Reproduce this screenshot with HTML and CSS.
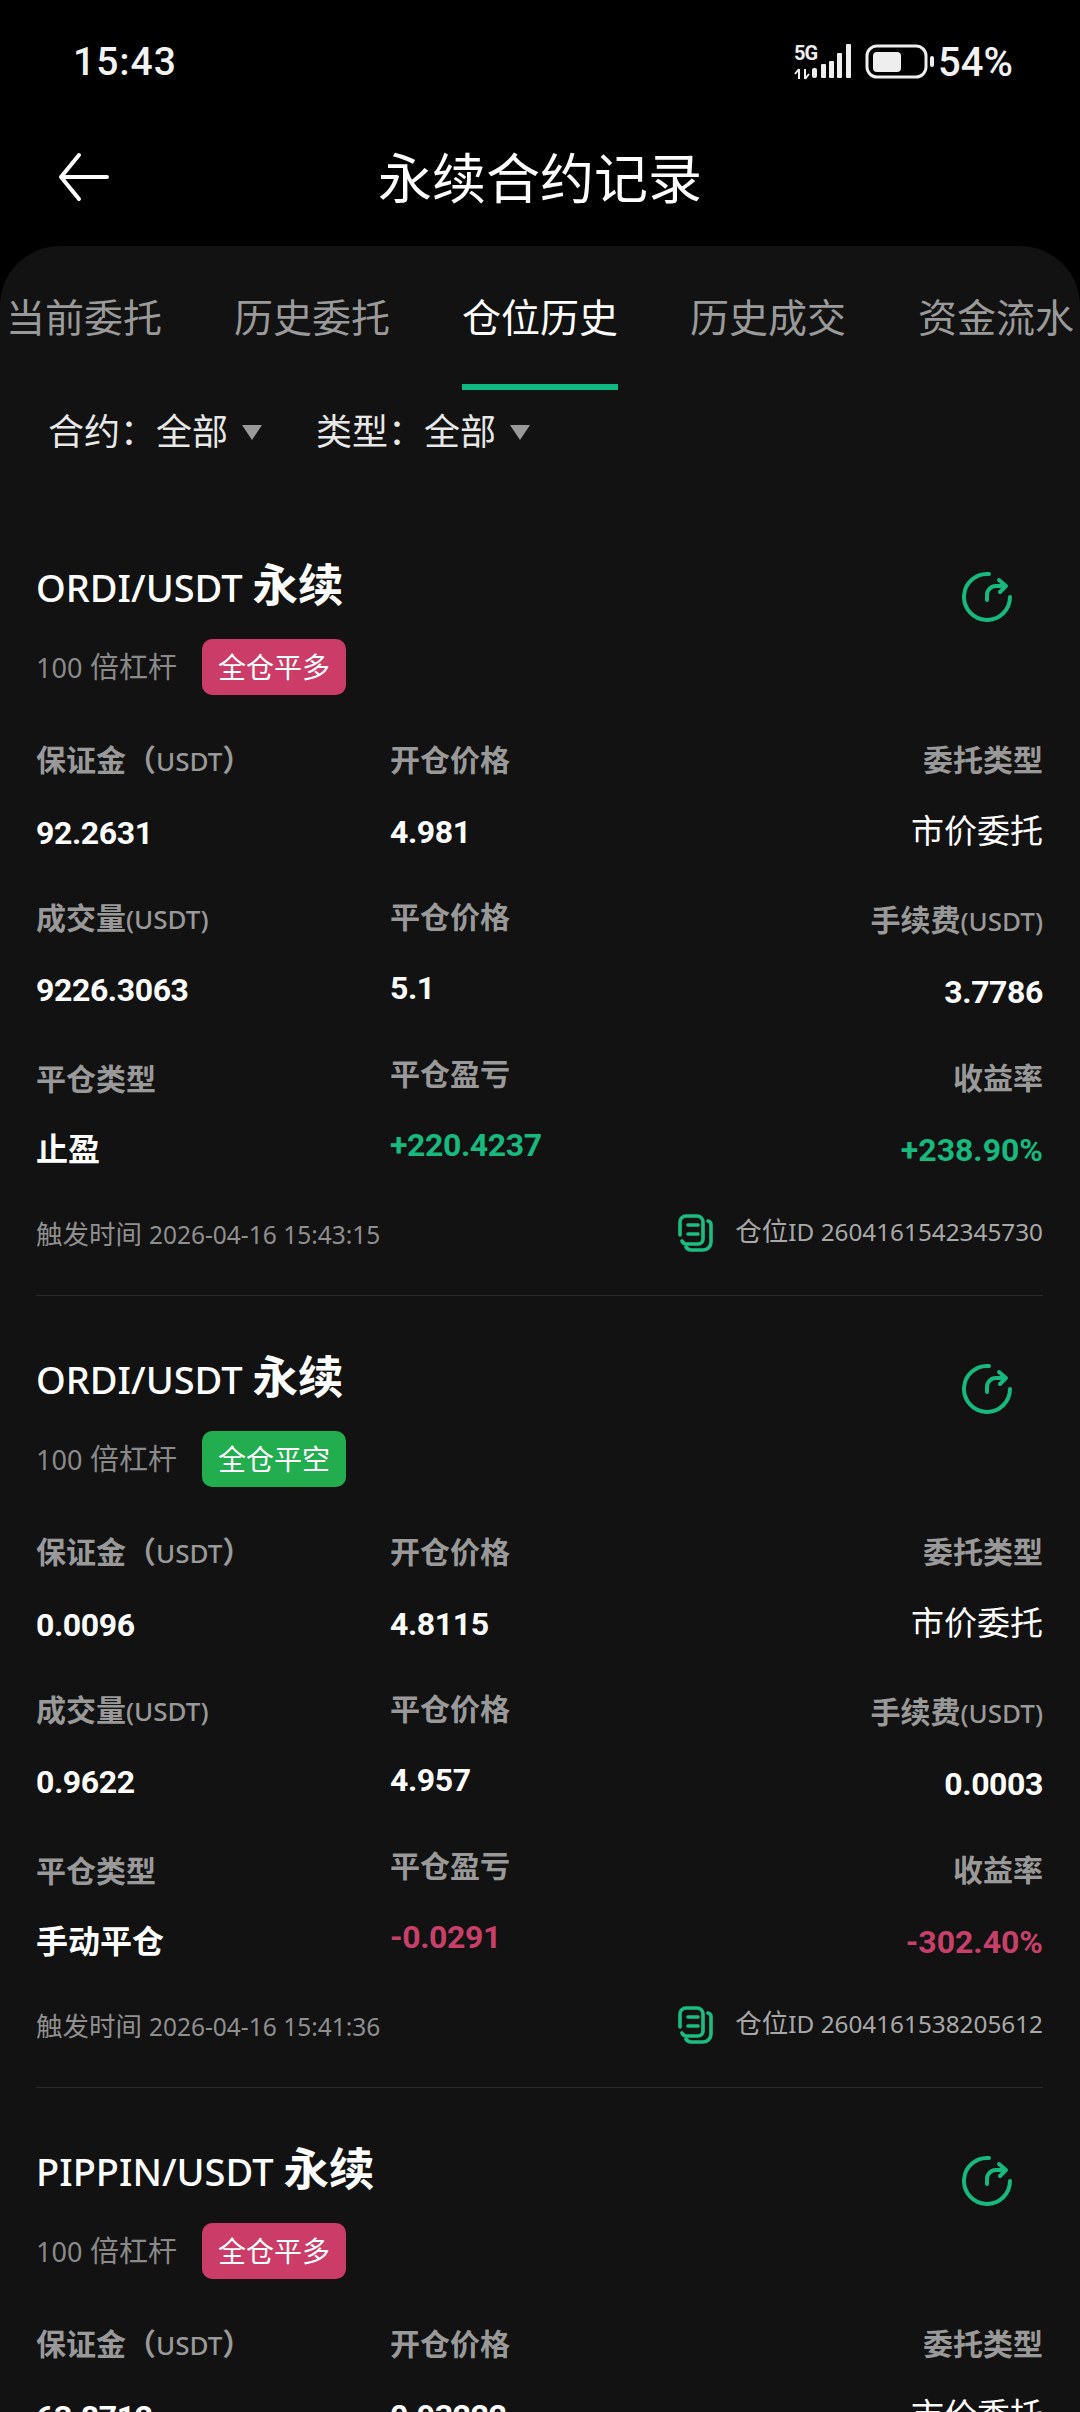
FILE: index.html
```html
<!DOCTYPE html>
<html>
  <head>
    <title>永续合约记录</title>
    <link rel="stylesheet" href="styles.css">
  </head>
  <body>
    <div class="screen">
      <div class="statusbar">
        <span class="clock">15:43</span>
        <div class="status-right">
          <div class="network">
            <span class="network-label">5G</span>
            <svg class="network-arrows" width="16" height="12" viewBox="0 0 16 12">
              <path d="M5 1v10M5 1L1 6M11 11V1M11 11l4-5" fill="none" stroke="#eee" stroke-width="2"/>
            </svg>
          </div>
          <svg class="signal" width="40" height="36" viewBox="0 0 40 36">
            <rect x="0" y="24" width="5" height="10" rx="2" fill="#eee"/>
            <rect x="9" y="20" width="5" height="14" rx="1" fill="#eee"/>
            <rect x="17" y="17" width="5" height="17" rx="1" fill="#eee"/>
            <rect x="25" y="9" width="5" height="25" rx="1" fill="#eee"/>
            <rect x="34" y="0" width="5" height="34" rx="1" fill="#eee"/>
          </svg>
          <svg class="battery" width="70" height="36" viewBox="0 0 70 36">
            <rect x="2" y="2" width="59" height="31" rx="10" fill="none" stroke="#eee" stroke-width="3"/>
            <rect x="8" y="8" width="28" height="20" rx="4" fill="#eee"/>
            <rect x="65" y="12" width="4" height="11" rx="2" fill="#eee"/>
          </svg>
          <span class="percent">54%</span>
        </div>
      </div>

      <div class="navbar">
        <svg class="back" width="56" height="56" viewBox="0 0 56 56">
          <path d="M52 28H6M24 6L6 28l18 22" fill="none" stroke="#fff" stroke-width="4" stroke-linecap="round" stroke-linejoin="round"/>
        </svg>
        <h1 class="page-title">永续合约记录</h1>
      </div>

      <div class="sheet">
        <div class="tabs">
          <div class="tab">当前委托</div>
          <div class="tab">历史委托</div>
          <div class="tab active">仓位历史</div>
          <div class="tab">历史成交</div>
          <div class="tab">资金流水</div>
        </div>

        <div class="filters">
          <div class="filter">合约：全部<span class="caret"></span></div>
          <div class="filter">类型：全部<span class="caret"></span></div>
        </div>

        <div class="card">
          <div class="card-head">
            <div>
              <div class="symbol">ORDI/USDT <b>永续</b></div>
              <div class="sub">
                <span class="leverage"><span class="lev-num">100</span> 倍杠杆</span>
                <span class="badge red">全仓平多</span>
              </div>
            </div>
            <svg class="share" width="52" height="52" viewBox="0 0 52 52">
              <path d="M27 3a23 23 0 1 0 21 23" fill="none" stroke="#17b97f" stroke-width="4" stroke-linecap="round"/>
              <path d="M25 29v-5a9 9 0 0 1 9-9h9M37 9l7 6-6 6" fill="none" stroke="#17b97f" stroke-width="4" stroke-linecap="round" stroke-linejoin="round"/>
            </svg>
          </div>
          <div class="stats">
            <div class="col col-1">
              <div class="label">保证金（<span class="unit">USDT</span>）</div>
              <div class="value">92.2631</div>
              <div class="label">成交量<span class="unit">(USDT)</span></div>
              <div class="value">9226.3063</div>
              <div class="label">平仓类型</div>
              <div class="value cjk">止盈</div>
            </div>
            <div class="col col-2">
              <div class="label">开仓价格</div>
              <div class="value">4.981</div>
              <div class="label">平仓价格</div>
              <div class="value">5.1</div>
              <div class="label">平仓盈亏</div>
              <div class="value green">+220.4237</div>
            </div>
            <div class="col col-3">
              <div class="label">委托类型</div>
              <div class="value plain">市价委托</div>
              <div class="label">手续费<span class="unit">(USDT)</span></div>
              <div class="value">3.7786</div>
              <div class="label">收益率</div>
              <div class="value green rate">+238.90%</div>
            </div>
          </div>
          <div class="card-foot">
            <span class="trigger">触发时间 <span class="num">2026-04-16 15:43:15</span></span>
            <div class="position-id">
              <svg class="copy" width="36" height="40" viewBox="0 0 36 40">
                <path d="M3 22V9a6 6 0 0 1 6-6h11a6 6 0 0 1 6 6v17a5 5 0 0 1-5 5H9a5 5 0 0 1-4-3" fill="none" stroke="#1dbd82" stroke-width="3.6" stroke-linecap="round"/>
                <path d="M31 8a4 4 0 0 1 3 4v17a8 8 0 0 1-8 8H14a6 6 0 0 1-5-3" fill="none" stroke="#1dbd82" stroke-width="3.6" stroke-linecap="round"/>
                <path d="M11 12h10M11 21h10" fill="none" stroke="#1dbd82" stroke-width="3.6" stroke-linecap="round"/>
              </svg>
              <span class="position-text">仓位<span class="num-id">ID 2604161542345730</span></span>
            </div>
          </div>
        </div>

        <div class="card">
          <div class="card-head">
            <div>
              <div class="symbol">ORDI/USDT <b>永续</b></div>
              <div class="sub">
                <span class="leverage"><span class="lev-num">100</span> 倍杠杆</span>
                <span class="badge green-bg">全仓平空</span>
              </div>
            </div>
            <svg class="share" width="52" height="52" viewBox="0 0 52 52">
              <path d="M27 3a23 23 0 1 0 21 23" fill="none" stroke="#17b97f" stroke-width="4" stroke-linecap="round"/>
              <path d="M25 29v-5a9 9 0 0 1 9-9h9M37 9l7 6-6 6" fill="none" stroke="#17b97f" stroke-width="4" stroke-linecap="round" stroke-linejoin="round"/>
            </svg>
          </div>
          <div class="stats">
            <div class="col col-1">
              <div class="label">保证金（<span class="unit">USDT</span>）</div>
              <div class="value">0.0096</div>
              <div class="label">成交量<span class="unit">(USDT)</span></div>
              <div class="value">0.9622</div>
              <div class="label">平仓类型</div>
              <div class="value cjk">手动平仓</div>
            </div>
            <div class="col col-2">
              <div class="label">开仓价格</div>
              <div class="value">4.8115</div>
              <div class="label">平仓价格</div>
              <div class="value">4.957</div>
              <div class="label">平仓盈亏</div>
              <div class="value red-text">-0.0291</div>
            </div>
            <div class="col col-3">
              <div class="label">委托类型</div>
              <div class="value plain">市价委托</div>
              <div class="label">手续费<span class="unit">(USDT)</span></div>
              <div class="value">0.0003</div>
              <div class="label">收益率</div>
              <div class="value red-text rate">-302.40%</div>
            </div>
          </div>
          <div class="card-foot">
            <span class="trigger">触发时间 <span class="num">2026-04-16 15:41:36</span></span>
            <div class="position-id">
              <svg class="copy" width="36" height="40" viewBox="0 0 36 40">
                <path d="M3 22V9a6 6 0 0 1 6-6h11a6 6 0 0 1 6 6v17a5 5 0 0 1-5 5H9a5 5 0 0 1-4-3" fill="none" stroke="#1dbd82" stroke-width="3.6" stroke-linecap="round"/>
                <path d="M31 8a4 4 0 0 1 3 4v17a8 8 0 0 1-8 8H14a6 6 0 0 1-5-3" fill="none" stroke="#1dbd82" stroke-width="3.6" stroke-linecap="round"/>
                <path d="M11 12h10M11 21h10" fill="none" stroke="#1dbd82" stroke-width="3.6" stroke-linecap="round"/>
              </svg>
              <span class="position-text">仓位<span class="num-id">ID 2604161538205612</span></span>
            </div>
          </div>
        </div>

        <div class="card">
          <div class="card-head">
            <div>
              <div class="symbol">PIPPIN/USDT <b>永续</b></div>
              <div class="sub">
                <span class="leverage"><span class="lev-num">100</span> 倍杠杆</span>
                <span class="badge red">全仓平多</span>
              </div>
            </div>
            <svg class="share" width="52" height="52" viewBox="0 0 52 52">
              <path d="M27 3a23 23 0 1 0 21 23" fill="none" stroke="#17b97f" stroke-width="4" stroke-linecap="round"/>
              <path d="M25 29v-5a9 9 0 0 1 9-9h9M37 9l7 6-6 6" fill="none" stroke="#17b97f" stroke-width="4" stroke-linecap="round" stroke-linejoin="round"/>
            </svg>
          </div>
          <div class="stats">
            <div class="col col-1">
              <div class="label">保证金（<span class="unit">USDT</span>）</div>
              <div class="value">63.8712</div>
            </div>
            <div class="col col-2">
              <div class="label">开仓价格</div>
              <div class="value">0.93222</div>
            </div>
            <div class="col col-3">
              <div class="label">委托类型</div>
              <div class="value plain">市价委托</div>
            </div>
          </div>
        </div>
      </div>
    </div>
  </body>
</html>
```

FILE: styles.css
```css
body, html {
  margin: 0;
  padding: 0;
  background: #000;
}
.screen {
  width: 1080px;
  height: 2412px;
  overflow: hidden;
  font-family: "Noto Sans", "Noto Sans CJK SC", sans-serif;
  color: #fff;
}

/* status bar */
.statusbar {
  height: 124px;
  padding: 0 67px 0 73px;
  display: flex;
  justify-content: space-between;
  align-items: center;
}
.clock {
  font-family: Roboto, sans-serif;
  font-size: 39px;
  font-weight: 500;
  letter-spacing: 1px;
  color: #f2f2f2;
}
.status-right {
  display: flex;
  align-items: center;
}
.network {
  width: 24px;
  height: 36px;
  display: flex;
  flex-direction: column;
  justify-content: space-between;
}
.network-label {
  font-family: Roboto, sans-serif;
  font-size: 20px;
  font-weight: 700;
  line-height: 19px;
  letter-spacing: -1px;
  color: #eee;
}
.signal {
  margin-left: -6px;
}
.battery {
  margin-left: 13px;
}
.percent {
  margin-left: 3px;
  font-family: Roboto, sans-serif;
  font-size: 40px;
  font-weight: 500;
  color: #f2f2f2;
}

/* nav */
.navbar {
  height: 108px;
  padding-bottom: 14px;
  position: relative;
  display: flex;
  align-items: center;
  justify-content: center;
}
.back {
  position: absolute;
  left: 55px;
  top: 25px;
}
.page-title {
  margin: 0;
  font-size: 54px;
  font-weight: 400;
  line-height: 64px;
}

.sheet {
  background: #121212;
  border-radius: 60px 60px 0 0;
}

.tabs {
  height: 144px;
  display: flex;
  box-sizing: border-box;
  padding-left: 6px;
  gap: 72px;
}
.tab {
  width: 156px;
  height: 144px;
  box-sizing: border-box;
  padding-top: 41px;
  font-size: 39px;
  line-height: 60px;
  white-space: nowrap;
  color: #9a9a9a;
}
.tab.active {
  color: #fff;
  border-bottom: 6px solid #10b981;
}

.filters {
  display: flex;
  padding: 12px 0 0 48px;
  margin-bottom: 42px;
  gap: 54px;
}
.filter {
  font-size: 36px;
  line-height: 60px;
  color: #e8e8e8;
  display: flex;
  align-items: center;
}
.caret {
  margin-left: 14px;
  width: 0;
  height: 0;
  border-left: 10px solid transparent;
  border-right: 10px solid transparent;
  border-top: 15px solid #999;
}

/* position card */
.card {
  margin: 0 37px 0 36px;
  height: 792px;
  box-sizing: border-box;
  padding-top: 49px;
  border-bottom: 1px solid #2a2a2a;
}
.card-head {
  display: flex;
  justify-content: space-between;
}
.symbol {
  font-size: 38px;
  font-weight: 500;
  line-height: 62px;
  color: #fff;
}
.symbol b {
  font-size: 45.5px;
  font-weight: 700;
}
.sub {
  display: flex;
  align-items: center;
  margin-top: 21px;
}
.leverage {
  font-size: 29px;
  line-height: 52px;
  color: #8a8a8a;
}
.lev-num {
  font-size: 27px;
}
.badge {
  margin-left: 25px;
  width: 144px;
  height: 56px;
  border-radius: 10px;
  font-size: 28px;
  line-height: 56px;
  text-align: center;
}
.red { background: #cb3c68; }
.green-bg { background: #22ad4f; }
.share {
  margin: 18px 29px 0 0;
}

.stats {
  display: flex;
}
.col {
  display: flex;
  flex-direction: column;
}
.col-1 { width: 354px; }
.col-2 { flex: 1; }
.col-3 { align-items: flex-end; }
.label {
  font-size: 30px;
  font-weight: 700;
  line-height: 40px;
  margin-top: 45px;
  color: #999;
  white-space: nowrap;
}
.unit {
  font-weight: 500;
  font-size: 26px;
}
.value {
  font-family: Roboto, "Noto Sans CJK SC", sans-serif;
  font-size: 32px;
  font-weight: 700;
  line-height: 40px;
  letter-spacing: -0.4px;
  margin-top: 31px;
  color: #fff;
}
.label:first-child + .value { margin-top: 32px; }
.col-1 .label:nth-child(5) { margin-top: 49px; }
.col-2 .label:nth-child(5) { margin-top: 46px; }
.col-3 .label:nth-child(3) { margin-top: 48px; }
.col-3 .label:nth-child(5) { margin-top: 46px; }
.col-3 .value:nth-child(6) { margin-top: 32px; }
.value.cjk { letter-spacing: 0; }
.value.plain { font-weight: 400; font-size: 33px; letter-spacing: 0; }
.value.rate { letter-spacing: 0; }
.value.green { color: #17b97f; }
.value.red-text { color: #c8406a; }

.card-foot {
  display: flex;
  justify-content: space-between;
  align-items: center;
  margin-top: 40px;
}
.trigger {
  font-size: 26.5px;
  color: #8f8f8f;
}
.trigger .num {
  font-size: 24.5px;
}
.position-id {
  display: flex;
  align-items: center;
  font-size: 26.5px;
  color: #a8a8a8;
}
.position-text {
  padding-bottom: 6px;
}
.num-id {
  font-size: 24.3px;
}
.copy {
  margin-right: 22px;
}
```
